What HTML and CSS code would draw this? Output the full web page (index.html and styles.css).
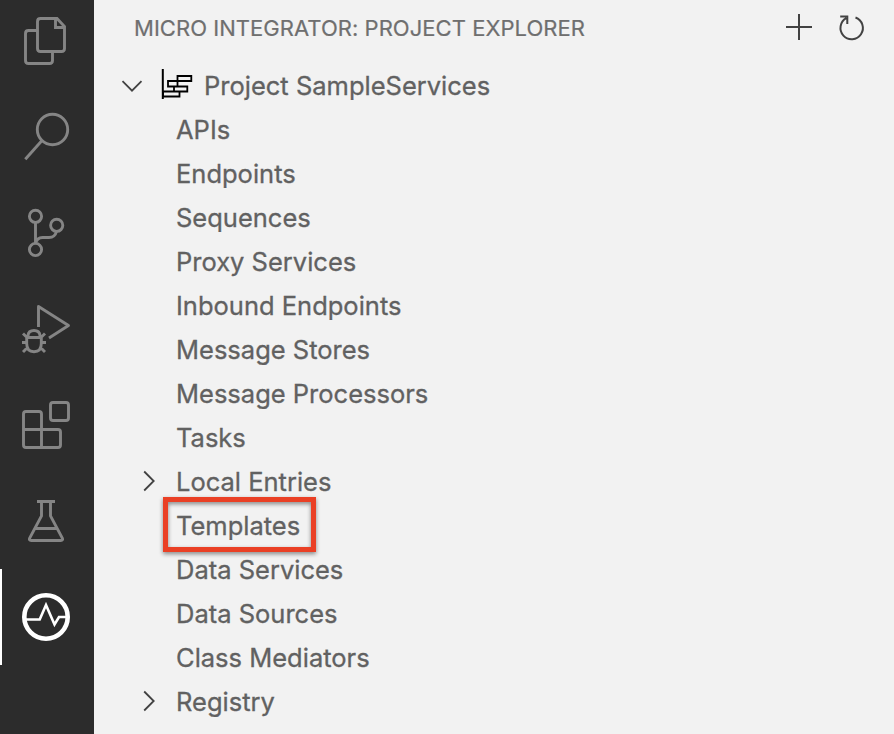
FILE: index.html
```html
<!DOCTYPE html>
<html lang="en">
<head>
<meta charset="utf-8">
<title>Micro Integrator: Project Explorer</title>
<link rel="stylesheet" href="styles.css">
</head>
<body>
<nav class="activity-bar">
  <a class="activity"><svg viewBox="0 -7 94 96"><path d="M56 18.500H40.500q-3 0-3 3v27q0 3 3 3h21q3 0 3-3V26.500L57 18.500H55.500V27.500H64.500M37 30.500H28.500q-3 0-3 3v27q0 3 3 3h21q3 0 3-3V52"/></svg></a>
  <a class="activity"><svg viewBox="0 89 94 96"><circle cx="52.500" cy="129.500" r="15.200"/><path d="M42 140.500L25.300 159.300"/></svg></a>
  <a class="activity"><svg viewBox="0 185 94 96"><circle cx="35.500" cy="216.300" r="6.100"/><circle cx="56.700" cy="225.300" r="6.100"/><circle cx="35.500" cy="249.500" r="6.100"/><path d="M35.500 222.500V243.500Q37 237.500 42.500 237.500H49Q55 237.500 56.500 231.500"/></svg></a>
  <a class="activity"><svg viewBox="0 281 94 96"><path stroke-linejoin="round" d="M38.500 327V306.500L68.500 325.500L49 338"/><path d="M28 337.500V335.500Q28.500 330.500 34 330.500T40 335.500V337.500M26.700 337.500H41.300V343.500Q41.300 351.700 34 351.700T26.700 343.500ZM27.500 338L23 333.500M40.500 338L45 333.500M22 342.500H26.500M41.500 342.500H46M28 347L23 352M40 347L45 352"/></svg></a>
  <a class="activity"><svg viewBox="0 377 94 96"><rect x="50.500" y="402.500" width="18" height="18" rx="2.500"/><path d="M23.500 429.500H58q2.500 0 2.500 2.500V445q0 2.500-2.500 2.500H26q-2.500 0-2.500-2.500V414q0-2.500 2.500-2.500H39q2.500 0 2.500 2.500V447.500"/></svg></a>
  <a class="activity"><svg viewBox="0 473 94 96"><path d="M37 501.500H55M41.500 502V516L29.700 538q-1 2.500 1.500 2.500H60.800q2.500 0 1.500-2.500L50.500 516V502M35 528.500H57"/></svg></a>
  <a class="activity active"><svg viewBox="0 569 94 96"><circle class="ring" cx="46" cy="617" r="21.700"/><path class="pulse" d="M26 619.500H39.700L46 605L54.500 624.500L59 617H67"/></svg></a>
</nav>
<main class="explorer">
  <header class="header">
    <h1 class="title">MICRO INTEGRATOR: PROJECT EXPLORER</h1>
    <div class="actions">
      <svg viewBox="0 0 28 28"><path d="M14 0V26M1 13H27"/></svg>
      <svg viewBox="0 0 28 28"><path d="M17.500 3.500A11.200 11.200 0 1 1 8.300 4.200M2.200 2.500H9.300V10"/></svg>
    </div>
  </header>
  <ul class="tree">
    <li class="row project">
      <svg class="chevron" viewBox="0 0 22 22"><path d="M1.500 6.200L11 15.700L20.500 6.200"/></svg>
      <svg class="project-icon" viewBox="160 67 34 34"><path class="axis" d="M162.800 69V99"/><path d="M177.500 76H191.300V81H177.500ZM168 81H177.500V86.500H168ZM174 86.500H187.300V91.500H174ZM163 91.500H179.500V96.500H163Z"/></svg>
      <span class="label">Project SampleServices</span>
    </li>
    <li class="row"><span class="label">APIs</span></li>
    <li class="row"><span class="label">Endpoints</span></li>
    <li class="row"><span class="label">Sequences</span></li>
    <li class="row"><span class="label">Proxy Services</span></li>
    <li class="row"><span class="label">Inbound Endpoints</span></li>
    <li class="row"><span class="label">Message Stores</span></li>
    <li class="row"><span class="label">Message Processors</span></li>
    <li class="row"><span class="label">Tasks</span></li>
    <li class="row"><svg class="chevron" viewBox="0 0 22 22"><path d="M6.200 1.500L15.700 11L6.200 20.500"/></svg><span class="label">Local Entries</span></li>
    <li class="row highlighted"><span class="label">Templates</span></li>
    <li class="row"><span class="label">Data Services</span></li>
    <li class="row"><span class="label">Data Sources</span></li>
    <li class="row"><span class="label">Class Mediators</span></li>
    <li class="row"><svg class="chevron" viewBox="0 0 22 22"><path d="M6.200 1.500L15.700 11L6.200 20.500"/></svg><span class="label">Registry</span></li>
  </ul>
</main>
</body>
</html>
```
FILE: styles.css
```css
*, *::after { box-sizing: border-box; }
body {
  margin: 0;
  display: flex;
  height: 734px;
  overflow: hidden;
  background: #f2f2f2;
  color: #616161;
  font-family: Inter, "Liberation Sans", sans-serif;
}
svg { display: block; fill: none; flex: none; }
.activity-bar { width: 94px; flex: none; background: #2c2c2c; overflow: hidden; }
.activity { display: block; height: 96px; }
.activity:first-child { margin-top: -7px; }
.activity svg { width: 94px; height: 96px; stroke: #858585; stroke-width: 2.9; }
.active { box-shadow: inset 2px 0 #fff; }
.active svg { stroke: #fff; }
.active .ring { stroke-width: 4.6; }
.active .pulse { stroke-width: 2.6; }
.explorer { flex: 1; min-width: 0; }
.header {
  height: 63px;
  padding: 0 28px 7px 40px;
  display: flex;
  align-items: center;
  justify-content: space-between;
}
.title { margin: 0; font-size: 22px; letter-spacing: .04px; font-weight: 400; color: #6f6f6f; white-space: nowrap; -webkit-text-stroke: .2px; }
.actions { display: flex; gap: 25px; }
.actions svg { width: 28px; height: 28px; stroke: #424242; stroke-width: 2; }
.tree { list-style: none; margin: 0; padding: 0; }
.row {
  height: 44px;
  display: flex;
  align-items: center;
  justify-content: flex-start;
  padding-left: 82px;
  font-size: 25.5px;
  white-space: nowrap;
  position: relative;
}
.label { -webkit-text-stroke: .3px; }
.project { padding-left: 27px; }
.chevron { width: 22px; height: 22px; stroke: #424242; stroke-width: 1.8; }
.project .chevron { margin-top: 2px; }
.row:not(.project) .chevron { margin: 0 16px 0 -38px; }
.project-icon { width: 34px; height: 34px; margin: 0 10px 2px 17px; stroke: #000; stroke-width: 1.8; }
.project-icon .axis { stroke-width: 2; }
.highlighted::after {
  content: "";
  position: absolute;
  left: 69px;
  top: -6px;
  width: 153px;
  height: 55px;
  border: 5px solid #ea4025;
  filter: drop-shadow(0 2px 2px rgba(0, 0, 0, .45));
}
```
